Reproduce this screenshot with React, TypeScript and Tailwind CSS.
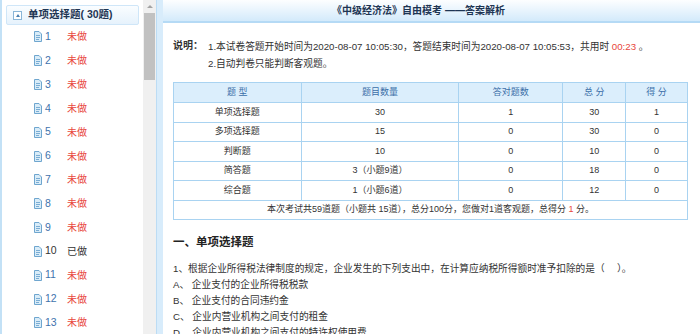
import React from "react";

const font = { fontFamily: '"Liberation Sans", "Noto Sans CJK SC", sans-serif' };

function DocIcon() {
  return (
    <svg width="9" height="11" viewBox="0 0 9 11" className="shrink-0">
      <path d="M1.5 0.5 H6 L8.5 3 V10.5 H1.5 Z" fill="#d9ecf8" stroke="#6fa6cf" strokeWidth="1" />
      <path d="M3 4.5 H7 M3 6.5 H7 M3 8.5 H6" stroke="#6fa6cf" strokeWidth="0.9" />
    </svg>
  );
}

const items = Array.from({ length: 13 }, (_, i) => i + 1);

const rows = [
  ["单项选择题", "30", "1", "30", "1"],
  ["多项选择题", "15", "0", "30", "0"],
  ["判断题", "10", "0", "10", "0"],
  ["简答题", "3（小题9道）", "0", "18", "0"],
  ["综合题", "1（小题6道）", "0", "12", "0"],
];

export default function App() {
  return (
    <div className="flex h-[334px] w-[700px] overflow-hidden bg-white text-[10px] text-[#333]" style={font}>
      {/* left tree */}
      <div className="w-[143px] shrink-0 border-l-2 border-[#c3e1f6] bg-white">
        <div className="mx-[4px] mt-[5px] flex h-[20px] items-center rounded-[2px] border border-[#cfe6f8] bg-gradient-to-b from-[#fafdff] to-[#e6f2fc] pl-[6px]">
          <div className="flex h-[9px] w-[9px] items-center justify-center border border-[#8ab6d8] bg-white">
            <div className="h-0 w-0 border-x-[2.5px] border-b-[3px] border-x-transparent border-b-[#4a7fb0]" />
          </div>
          <span className="ml-[6px] text-[10.5px] font-bold text-[#1e3553]">单项选择题( 30题)</span>
        </div>
        <div>
          {items.map((n) => (
            <div key={n} className="flex h-[23.83px] items-center pl-[31px]">
              <DocIcon />
              <span className={`ml-[3px] w-[22px] text-[10.5px] ${n === 10 ? "text-[#333]" : "text-[#3f73ad]"}`}>{n}</span>
              <span className={n === 10 ? "text-[#333]" : "text-[#e8463c]"}>{n === 10 ? "已做" : "未做"}</span>
            </div>
          ))}
        </div>
      </div>
      {/* scrollbar */}
      <div className="w-[13px] shrink-0 bg-[#f0f0f0]">
        <div className="mx-auto mt-[5px] h-0 w-0 border-x-[3px] border-b-[3px] border-x-transparent border-b-[#a3a3a3]" />
        <div className="mx-auto mt-[5px] h-[67px] w-[11px] bg-[#c1c1c1]" />
      </div>
      <div className="w-[7px] shrink-0 border-l border-[#bcdcf4] bg-[#d8ecfb]" />
      {/* main */}
      <div className="flex-1 text-[9.7px]">
        <div className="flex h-[23px] items-center justify-center border-b-2 border-[#b5daf5] bg-gradient-to-b from-[#fdfeff] to-[#d3eafb] pr-[26px] text-[10px] font-bold text-[#1e3553]">
          《中级经济法》自由模考 ——答案解析
        </div>
        <div className="pl-[10px] pr-[12px]">
          <div className="mt-[15px] flex">
            <span className="w-[35px] shrink-0 text-[10px] font-bold">说明：</span>
            <div className="leading-[17px]">
              <div className="whitespace-nowrap">
                1.本试卷答题开始时间为2020-08-07 10:05:30，答题结束时间为2020-08-07 10:05:53，共用时 <span className="text-[#e8463c]">00:23</span> 。
              </div>
              <div>2.自动判卷只能判断客观题。</div>
            </div>
          </div>
          <table className="mt-[10px] w-[515px] border-collapse border border-[#a9d3f1] text-center text-[9px]">
            <colgroup>
              <col className="w-[128px]" />
              <col className="w-[158px]" />
              <col className="w-[104px]" />
              <col className="w-[63px]" />
              <col className="w-[62px]" />
            </colgroup>
            <thead>
              <tr className="h-[20px] bg-[#dbeefc] text-[#3b6fa8]">
                {["题 型", "题目数量", "答对题数", "总 分", "得 分"].map((h) => (
                  <th key={h} className="border border-[#a9d3f1] p-0 font-normal">{h}</th>
                ))}
              </tr>
            </thead>
            <tbody>
              {rows.map((r) => (
                <tr key={r[0]} className="h-[19.6px]">
                  {r.map((c, i) => (
                    <td key={i} className="border border-[#a9d3f1] p-0">{c}</td>
                  ))}
                </tr>
              ))}
              <tr className="h-[19px]">
                <td colSpan={5} className="border border-[#a9d3f1] p-0">
                  本次考试共59道题（小题共 15道），总分100分，您做对1道客观题，总得分 <span className="text-[#e8463c]">1</span> 分。
                </td>
              </tr>
            </tbody>
          </table>
          <div className="mt-[14px] text-[11.5px] font-bold text-[#222]">一、单项选择题</div>
          <div className="mt-[10px] leading-[16px]">
            <div className="whitespace-nowrap">1、根据企业所得税法律制度的规定，企业发生的下列支出中，在计算应纳税所得额时准予扣除的是（　 ）。</div>
            <div>A、 企业支付的企业所得税税款</div>
            <div>B、 企业支付的合同违约金</div>
            <div>C、 企业内营业机构之间支付的租金</div>
            <div>D、 企业内营业机构之间支付的特许权使用费</div>
          </div>
        </div>
      </div>
    </div>
  );
}
